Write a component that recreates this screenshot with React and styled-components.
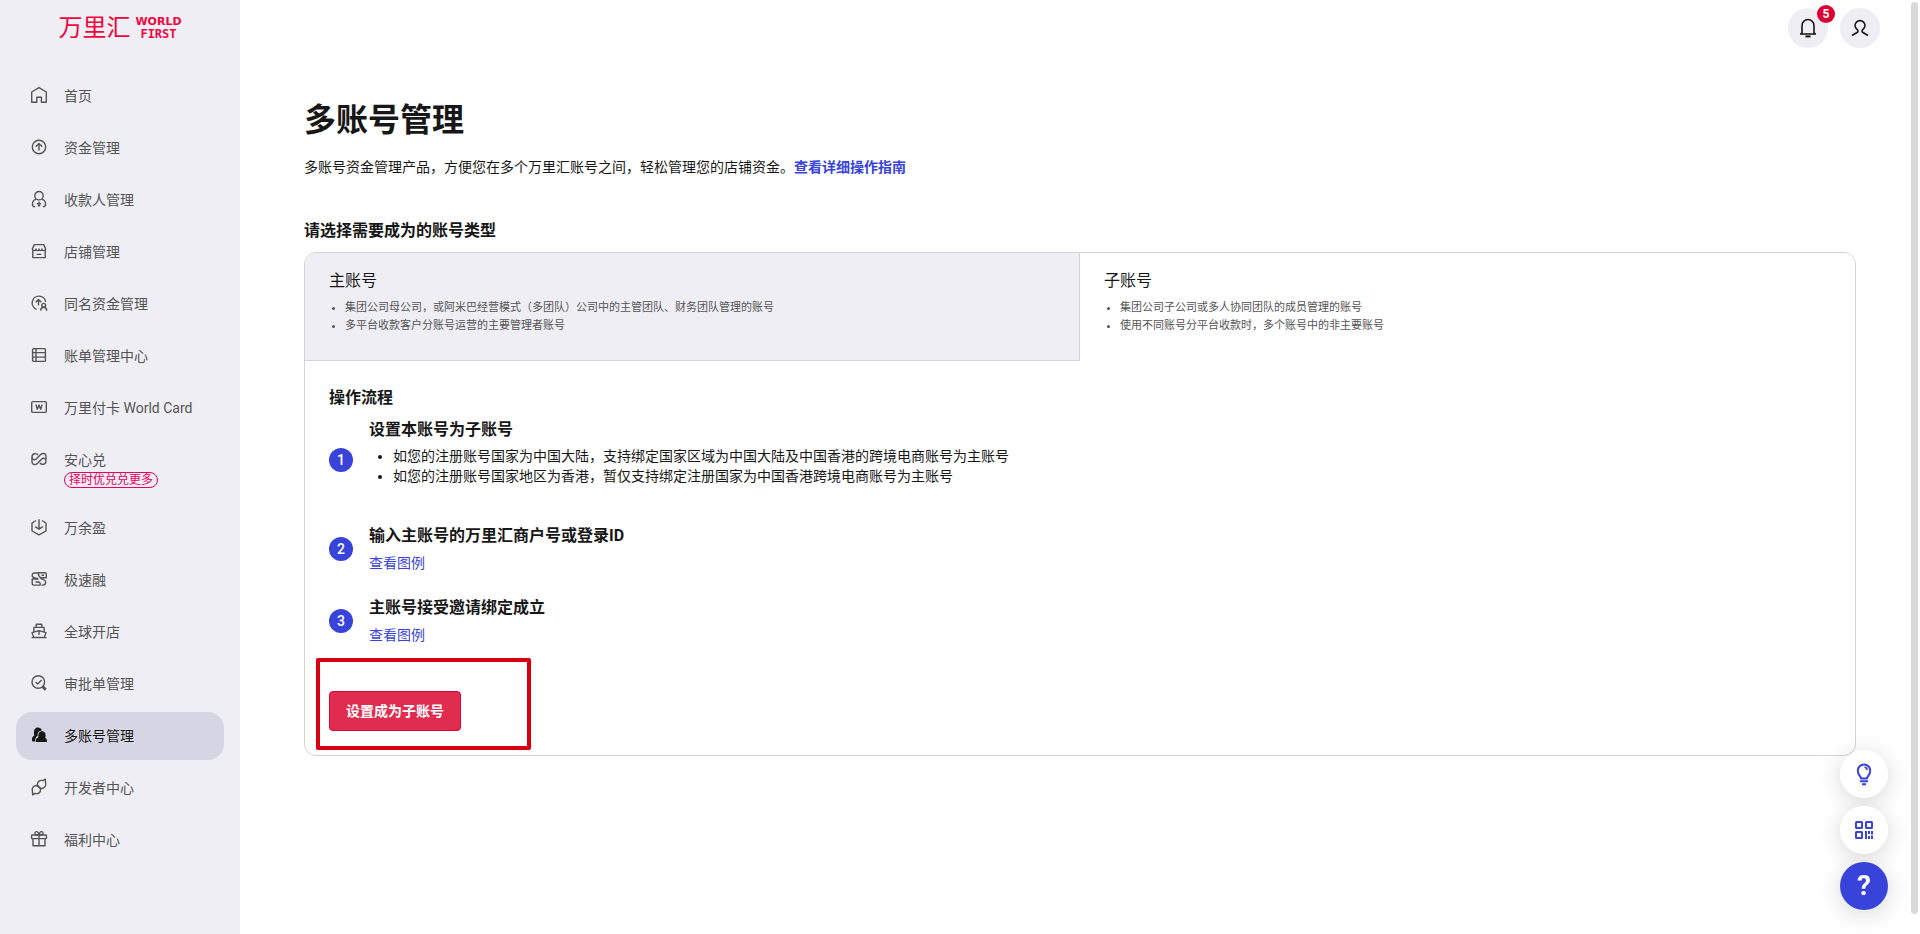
import React from "react";
import styled, { createGlobalStyle } from "styled-components";

const color = {
  text: "#171717",
  muted: "#545454",
  line: "#d3d3d5",
  panel: "#efeef4",
  active: "#d6d5e3",
  blue: "#3843d9",
  red: "#d9043a",
};

const GlobalStyle = createGlobalStyle`
  *, *::before, *::after { box-sizing: border-box; }
  body {
    margin: 0;
    background: #fff;
    color: ${color.text};
    font-family: Roboto, "Noto Sans CJK SC", sans-serif;
    font-size: 14px;
    line-height: 22px;
  }
  button { font: inherit; color: inherit; border: 0; background: none; padding: 0; cursor: pointer; }
  h1, h2, h3, p, ul, ol { margin: 0; padding: 0; }
  svg { display: block; flex: none; }
`;

const Layout = styled.div`
  display: flex;
  min-height: 100vh;
`;

const Sidebar = styled.aside`
  flex: none;
  width: 240px;
  padding: 0 16px 24px;
  background: ${color.panel};
`;

const Logo = styled.a`
  display: flex;
  justify-content: center;
  align-items: center;
  gap: 5px;
  height: 56px;
  margin-bottom: 16px;
  color: #f0063f;
  text-decoration: none;
`;

const LogoName = styled.span`
  font-size: 24px;
  line-height: 32px;
`;

const LogoLatin = styled.span`
  display: flex;
  flex-direction: column;
  align-items: center;
  font: bold 11px/13px "DejaVu Sans", sans-serif;
`;

const LogoMono = styled.span`
  font: bold 12px/13px "DejaVu Sans Mono", monospace;
`;

const Menu = styled.nav`
  display: flex;
  flex-direction: column;
  gap: 4px;
`;

const MenuItem = styled.a`
  display: flex;
  align-items: flex-start;
  gap: 16px;
  min-height: 48px;
  padding: 13px 14px 12px;
  border-radius: 16px;
  background: ${(p) => (p.$active ? color.active : "transparent")};
  color: ${(p) => (p.$active ? color.text : color.muted)};
  text-decoration: none;

  svg { margin-top: 1px; }
`;

const MenuLabel = styled.span`
  display: flex;
  flex-direction: column;
  align-items: flex-start;
  gap: 1px;
`;

const Tag = styled.span`
  height: 16px;
  padding: 0 4px;
  border: 1px solid #e4005c;
  border-radius: 8px;
  color: #e4005c;
  font-size: 12px;
  line-height: 14px;
`;

const Main = styled.div`
  flex: 1;
  min-width: 0;
`;

const Header = styled.header`
  display: flex;
  justify-content: flex-end;
  gap: 12px;
  padding: 8px 40px;
`;

const RoundButton = styled.button`
  position: relative;
  display: flex;
  align-items: center;
  justify-content: center;
  width: 40px;
  height: 40px;
  border-radius: 50%;
  background: ${color.panel};
`;

const Badge = styled.span`
  position: absolute;
  top: -3px;
  right: -7px;
  width: 18px;
  height: 18px;
  border-radius: 50%;
  background: #dc0032;
  color: #fff;
  font-size: 12px;
  font-weight: 700;
  line-height: 18px;
`;

const Content = styled.main`
  padding: 40px 64px;
`;

const PageTitle = styled.h1`
  font-size: 32px;
  line-height: 48px;
`;

const Intro = styled.p`
  margin: 12px 0 41px;
`;

const Link = styled.a`
  color: ${color.blue};
  font-weight: ${(p) => (p.$strong ? 700 : 400)};
  text-decoration: none;
`;

const Heading = styled.h2`
  font-size: 16px;
  font-weight: 700;
  line-height: 24px;
`;

const Card = styled.section`
  margin-top: 9px;
  border: 1px solid ${color.line};
  border-radius: 12px;
  overflow: hidden;
`;

const Tabs = styled.div`
  display: grid;
  grid-template-columns: 1fr 1fr;
`;

const Tab = styled.button`
  display: flex;
  flex-direction: column;
  gap: 6px;
  padding: 16px 24px 25px;
  text-align: left;
  border: solid ${(p) => (p.$filled ? color.line : "transparent")};
  border-width: 0 1px 1px 0;
  background: ${(p) => (p.$filled ? color.panel : "#fff")};
`;

const TabTitle = styled.span`
  font-size: 16px;
  line-height: 24px;
`;

const TabNotes = styled.span`
  display: block;
  padding-left: 16px;
  color: ${color.muted};
  font-size: 11px;
  line-height: 18px;
`;

const TabNote = styled.span`
  display: list-item;
  list-style: disc;
`;

const Flow = styled.div`
  padding: 25px 24px 24px;
`;

const Steps = styled.ol`
  display: flex;
  flex-direction: column;
  gap: 22px;
  margin-top: 8px;
  list-style: none;
`;

const Step = styled.li`
  display: flex;
  align-items: center;
  gap: 16px;
`;

const StepNumber = styled.span`
  flex: none;
  width: 24px;
  height: 24px;
  border-radius: 50%;
  background: ${color.blue};
  color: #fff;
  text-align: center;
  font-weight: 500;
  line-height: 24px;
`;

const StepBody = styled.div`
  display: flex;
  flex-direction: column;
  gap: 4px;
`;

const StepTitle = styled.h3`
  font-size: 16px;
  font-weight: 700;
  line-height: 24px;
`;

const StepNotes = styled.ul`
  padding: 0 0 16px 24px;
  line-height: 20px;
  list-style: disc;
`;

const Action = styled.div`
  position: relative;
  margin-top: 45px;
`;

const Primary = styled.button`
  display: block;
  width: 132px;
  height: 40px;
  border: 1px solid ${color.red};
  border-radius: 4px;
  background: #e02c4f;
  color: #fff;
  font-weight: 700;
`;

const Highlight = styled.div`
  position: absolute;
  top: -33px;
  left: -13px;
  width: 215px;
  height: 92px;
  border: 4px solid #d8000f;
  border-radius: 2px;
  pointer-events: none;
`;

const Floating = styled.div`
  position: fixed;
  right: 32px;
  bottom: 24px;
  display: flex;
  flex-direction: column;
  gap: 8px;
`;

const FloatButton = styled.button`
  display: flex;
  align-items: center;
  justify-content: center;
  width: 48px;
  height: 48px;
  border-radius: 50%;
  background: ${(p) => (p.$solid ? color.blue : "#fff")};
  color: ${(p) => (p.$solid ? "#fff" : color.blue)};
  font-size: 28px;
  font-weight: 700;
  box-shadow: 0 4px 24px rgba(0, 0, 0, 0.16);
`;

const ScrollThumb = styled.div`
  position: fixed;
  top: 2px;
  right: 2px;
  bottom: 20px;
  width: 7px;
  border-radius: 4px;
  background: #d8d8d8;
`;

const Icon = ({ size = 18, box = 18, width = 1.4, children }) => (
  <svg
    width={size}
    height={size}
    viewBox={`0 0 ${box} ${box}`}
    fill="none"
    stroke="currentColor"
    strokeWidth={width}
    strokeLinejoin="round"
    aria-hidden="true"
  >
    {children}
  </svg>
);

const icons = {
  home: <path d="M1.7 16.3V6L9 1.7 16.3 6v10.3h-4.9v-5H6.8v5z" />,
  fund: (
    <>
      <circle cx="9" cy="9" r="6.7" />
      <path d="M9 12.6V5.6M5.7 8.800 9 5.6l3.300 3.200" />
    </>
  ),
  payee: (
    <>
      <circle cx="9" cy="5.700" r="4.200" />
      <path d="M6 9.400c-3.400.6-4.600 4.300-2.600 7.200h1.800M12 9.400c3.400.6 4.600 4.300 2.600 7.200h-1.800" />
      <path d="M9 11.600v4M6.800 13.700h4.400M7.800 15.900h2.400" />
    </>
  ),
  shop: (
    <>
      <path d="M4.3 2.6h9.4l1.9 4.2c0 1.200-.9 1.800-1.800 1.800S12 8 12 7c0 1-.7 1.600-1.500 1.600S9 8 9 7c0 1-.7 1.600-1.500 1.600S6 8 6 7c0 1-.9 1.600-1.800 1.600S2.400 8 2.400 6.800z" />
      <path d="M2.800 8.500v7.100h12.400V8.500M6.600 12.400h4.800" />
    </>
  ),
  same: (
    <>
      <path d="M6.500 15.300A6.800 6.800 0 1 1 15.700 8M8.500 11.500V5.500M5.700 8.200l2.800-2.700 2.800 2.700" />
      <circle cx="13.700" cy="11.300" r="1.900" />
      <path d="M10.600 16.600c.2-2.300 1.400-3.400 3.100-3.400s2.900 1.100 3.100 3.400" />
    </>
  ),
  bill: (
    <>
      <rect x="2.600" y="2.600" width="12.800" height="12.800" rx="1" />
      <path d="M2.600 6.600h12.800M2.600 11.100h12.800M6 2.600v12.800" />
    </>
  ),
  card: (
    <>
      <rect x="1.700" y="3.600" width="14.600" height="10.800" rx="1.200" />
      <path d="M5.900 6.500 7.300 11.200 9 7l1.700 4.200 1.400-4.700" />
    </>
  ),
  exchange: (
    <>
      <path d="M7.900 5C6.200 2.600 2 3.500 2 7c0 3 2.800 3.300 4.200 1.900L10.600 4.600C12.700 2.600 16 3.300 16 6v3.500" />
      <path d="M10.100 13C11.800 15.400 16 14.500 16 11c0-3-2.800-3.300-4.200-1.900L7.400 13.400C5.300 15.400 2 14.700 2 12V7.500" />
    </>
  ),
  yield: <path d="M6 2.500 2 5v8L9 16.800 16 13V5L12 2.500M9 1.200v9.800M5.200 8.600 9 11.200l3.800-2.600" />,
  finance: (
    <>
      <path d="M8 3H4.300A2.300 2.300 0 0 0 3 7.100C4.400 8.200 6.300 7.700 8 9h-5.800v4.600c0 1 .7 1.500 1.600 1.500H10c.8-1.700-.2-3.100-2-3.100H5.500" />
      <path d="M8.500 2.700h6.300c1 0 1.500.6 1.500 1.500v3.600H10.500C8.800 6 7.800 4.500 8.500 2.700zM10.500 7.800c1 1.600 4.600 1.600 5.100 3.700.5 1.900-.6 3.600-2.700 3.600h-1.400M11.500 5.300h2.600" />
    </>
  ),
  ship: (
    <path d="M6.200 5.300v-3h5.600v3M3.900 9.700V5.400h10.200v4.300M2 10.600l7-2 7 2-1.700 4.900H3.700zM9 8.600v4.500M1.500 15.600h15" />
  ),
  review: (
    <>
      <circle cx="8.300" cy="8" r="6.300" />
      <path d="M5.500 7.900 7.700 10l3.900-3.900" />
      <path d="m12.700 12.500 3 3.200" strokeWidth="2.800" />
    </>
  ),
  accounts: (
    <g fill="currentColor" stroke="none">
      <path d="M7.900 1.600c2 0 3.500 1.200 3.900 2.900-3 .4-4.500 2.500-4.200 5.300-1.900 1-2.500 3-2.400 5.800H2.400c-1-2.700-.4-5.400 2-6.200C3.800 8.500 4 7.500 4 6c0-2.600 1.600-4.400 3.900-4.400z" />
      <path d="M12 5.300c2.300 0 3.800 1.800 3.600 4 0 1-.1 1.700-.4 2.400 1.600.7 1.900 2.200 1.600 4.300H5.900c-.2-2.500.4-4.100 2.600-4.700C7.800 8 9.200 5.300 12 5.300z" />
    </g>
  ),
  developer: (
    <>
      <path d="M7.400 6.700C7.200 3.600 9.900 1.700 13 2.700l2.300-1.500.3 3.800c.9 3-1.300 5.600-4.300 5.500C9.600 9.800 8 8.300 7.400 6.700z" />
      <path d="M10.600 11.300c.2 3.100-2.500 5-5.600 4l-2.300 1.500L2.400 13c-.9-3 1.300-5.600 4.300-5.500 1.700.7 3.300 2.200 3.900 3.800z" />
    </>
  ),
  gift: (
    <>
      <rect x="1.600" y="5" width="14.800" height="3.600" rx=".6" />
      <path d="M3 8.600v7.200h12V8.600M9 5v10.800M9 5H6.500a1.700 1.700 0 1 1 1.700-2.300L9 5l.8-2.300A1.700 1.700 0 1 1 11.500 5z" />
    </>
  ),
};

const menu = [
  { icon: "home", label: "首页" },
  { icon: "fund", label: "资金管理" },
  { icon: "payee", label: "收款人管理" },
  { icon: "shop", label: "店铺管理" },
  { icon: "same", label: "同名资金管理" },
  { icon: "bill", label: "账单管理中心" },
  { icon: "card", label: "万里付卡 World Card" },
  { icon: "exchange", label: "安心兑", tag: "择时优兑兑更多" },
  { icon: "yield", label: "万余盈" },
  { icon: "finance", label: "极速融" },
  { icon: "ship", label: "全球开店" },
  { icon: "review", label: "审批单管理" },
  { icon: "accounts", label: "多账号管理", active: true },
  { icon: "developer", label: "开发者中心" },
  { icon: "gift", label: "福利中心" },
];

const accountTypes = [
  {
    title: "主账号",
    filled: true,
    notes: [
      "集团公司母公司，或阿米巴经营模式（多团队）公司中的主管团队、财务团队管理的账号",
      "多平台收款客户分账号运营的主要管理者账号",
    ],
  },
  {
    title: "子账号",
    notes: [
      "集团公司子公司或多人协同团队的成员管理的账号",
      "使用不同账号分平台收款时，多个账号中的非主要账号",
    ],
  },
];

const steps = [
  {
    title: "设置本账号为子账号",
    notes: [
      "如您的注册账号国家为中国大陆，支持绑定国家区域为中国大陆及中国香港的跨境电商账号为主账号",
      "如您的注册账号国家地区为香港，暂仅支持绑定注册国家为中国香港跨境电商账号为主账号",
    ],
  },
  { title: "输入主账号的万里汇商户号或登录ID", link: "查看图例" },
  { title: "主账号接受邀请绑定成立", link: "查看图例" },
];

export default function App() {
  return (
    <>
      <GlobalStyle />
      <Layout>
        <Sidebar>
          <Logo href="#">
            <LogoName>万里汇</LogoName>
            <LogoLatin>
              <span>WORLD</span>
              <LogoMono>FIRST</LogoMono>
            </LogoLatin>
          </Logo>
          <Menu>
            {menu.map((item) => (
              <MenuItem key={item.label} href="#" $active={item.active} aria-current={item.active ? "page" : undefined}>
                <Icon>{icons[item.icon]}</Icon>
                <MenuLabel>
                  {item.label}
                  {item.tag && <Tag>{item.tag}</Tag>}
                </MenuLabel>
              </MenuItem>
            ))}
          </Menu>
        </Sidebar>

        <Main>
          <Header>
            <RoundButton aria-label="通知">
              <Icon size={20} box={20} width={1.6}>
                <path d="M4 15V7.500a6 6 0 0 1 12 0V15l1.300 1H2.700zM2 16h16" />
                <path d="M7.500 18.400h5" strokeWidth="2" />
              </Icon>
              <Badge>5</Badge>
            </RoundButton>
            <RoundButton aria-label="账户">
              <Icon size={20} box={20} width={1.6}>
                <path d="M2 17.500l5-3c1.300-.8 1.200-2 .3-2.800C6 10.600 5 9.300 5 7.600a5 5 0 0 1 10 0c0 1.700-1 3-2.300 4.100-.9.800-1 2 .3 2.800l5 3" />
              </Icon>
            </RoundButton>
          </Header>

          <Content>
            <PageTitle>多账号管理</PageTitle>
            <Intro>
              多账号资金管理产品，方便您在多个万里汇账号之间，轻松管理您的店铺资金。
              <Link href="#" $strong>查看详细操作指南</Link>
            </Intro>
            <Heading>请选择需要成为的账号类型</Heading>
            <Card>
              <Tabs role="tablist">
                {accountTypes.map((type) => (
                  <Tab key={type.title} role="tab" aria-selected={!type.filled} $filled={type.filled}>
                    <TabTitle>{type.title}</TabTitle>
                    <TabNotes>
                      {type.notes.map((note) => (
                        <TabNote key={note}>{note}</TabNote>
                      ))}
                    </TabNotes>
                  </Tab>
                ))}
              </Tabs>
              <Flow>
                <Heading>操作流程</Heading>
                <Steps>
                  {steps.map((step, index) => (
                    <Step key={step.title}>
                      <StepNumber>{index + 1}</StepNumber>
                      <StepBody>
                        <StepTitle>{step.title}</StepTitle>
                        {step.notes && (
                          <StepNotes>
                            {step.notes.map((note) => (
                              <li key={note}>{note}</li>
                            ))}
                          </StepNotes>
                        )}
                        {step.link && <Link href="#">{step.link}</Link>}
                      </StepBody>
                    </Step>
                  ))}
                </Steps>
                <Action>
                  <Primary>设置成为子账号</Primary>
                  <Highlight />
                </Action>
              </Flow>
            </Card>
          </Content>
        </Main>
      </Layout>

      <Floating>
        <FloatButton aria-label="提示">
          <Icon size={24} box={24} width={2}>
            <path d="M9 16.500c0-2.300-3.200-3.600-3.200-7.800a6.200 6.200 0 0 1 12.400 0c0 4.200-3.200 5.500-3.200 7.800z" />
            <path d="M12.500 5.300c1.600.2 2.500 1.200 2.700 2.800" strokeWidth="1.400" />
            <path d="M8 19.200h8M10 22.200h4" />
          </Icon>
        </FloatButton>
        <FloatButton aria-label="二维码">
          <Icon size={20} box={20} width={2}>
            <rect x="2" y="2" width="6" height="6" rx=".5" />
            <rect x="12" y="2" width="6" height="6" rx=".5" />
            <rect x="2" y="12" width="6" height="6" rx=".5" />
            <path d="M12 11v8M15 11v3M15 16v3M18 11v3.500M18 15.500V19" />
          </Icon>
        </FloatButton>
        <FloatButton $solid aria-label="帮助">?</FloatButton>
      </Floating>
      <ScrollThumb />
    </>
  );
}
